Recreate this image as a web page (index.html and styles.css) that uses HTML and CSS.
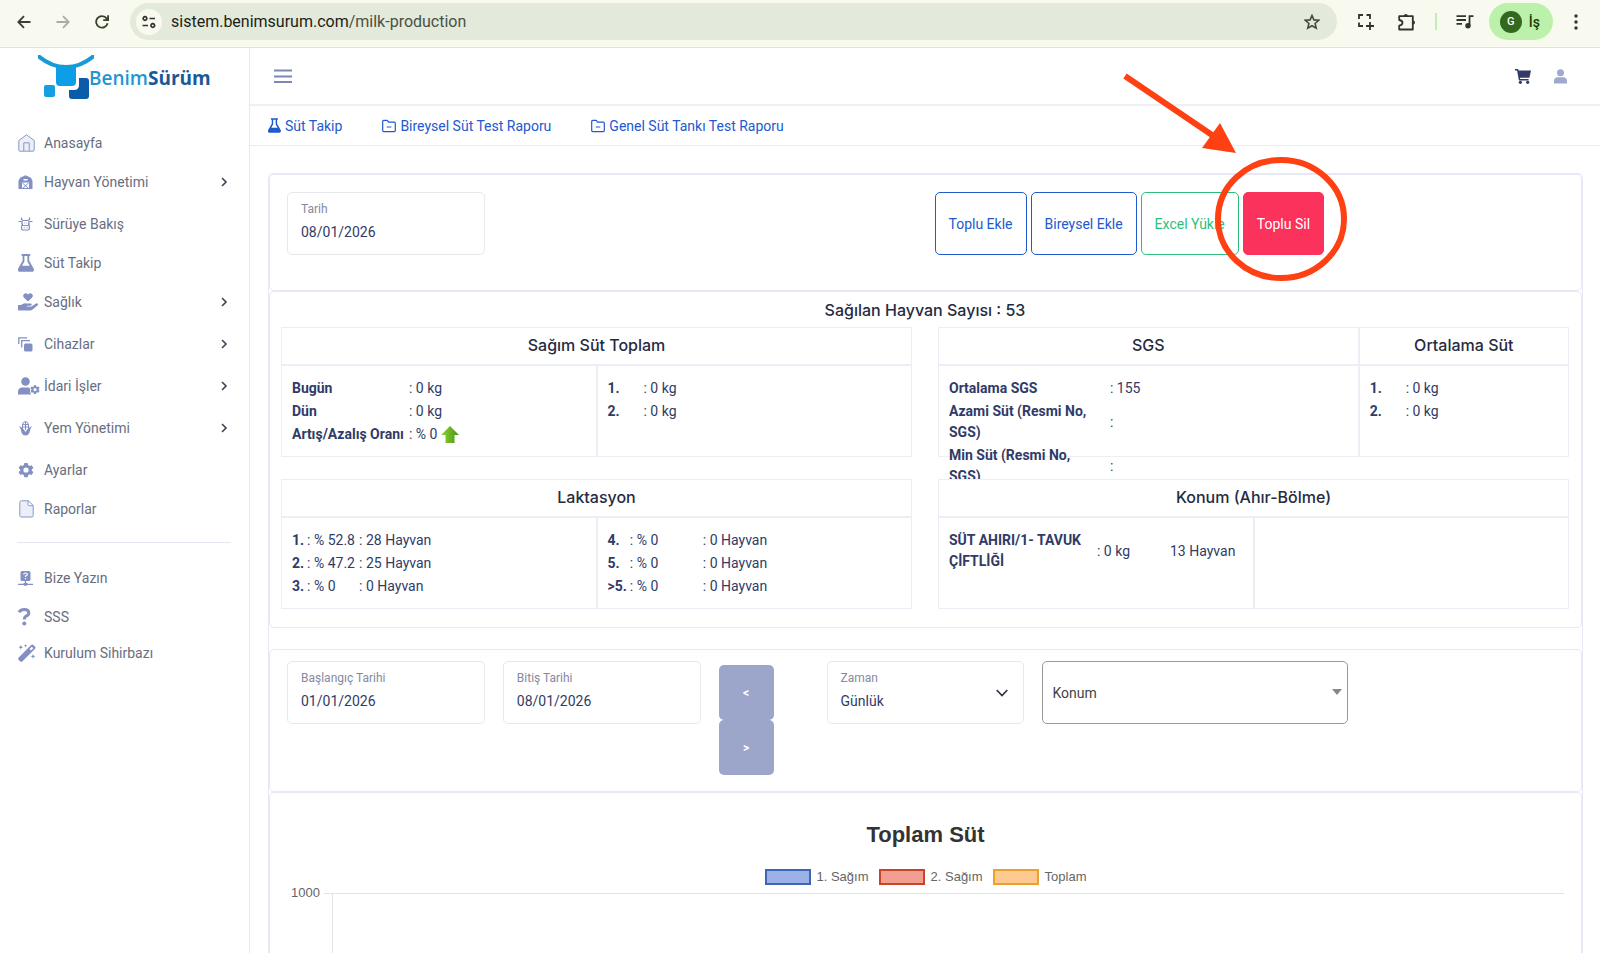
FILE: index.html
```html
<!DOCTYPE html>
<html lang="tr">

<head>
    <meta charset="UTF-8">
    <meta name="viewport" content="width=device-width, initial-scale=1.0">
    <title>BenimSürüm - Süt Takip</title>
    <link rel="stylesheet" href="styles.css">
</head>

<body>

    <!-- shared icons -->
    <svg class="sprite" aria-hidden="true">
        <symbol id="flask" viewBox="0 0 16 18">
            <path fill="currentColor" d="M3.6 0h8.6v2h-1v4.8l4.4 7.8c.9 1.700 0 3.200-1.600 3.200H1.800C.2 17.800-.7 16.300.2 14.600L4.600 6.800V2h-1zM6.400 2v5.400L4 11.800h7.800L9.400 7.400V2z" />
        </symbol>
        <symbol id="folder" viewBox="0 0 14 14">
            <path fill="none" stroke="currentColor" stroke-width="1.200" stroke-linejoin="round" d="M.7 3V11.600q0 1 1 1h10.600q1 0 1-1V4.200q0-1-1-1H6.600L5.200 1.400H1.700q-1 0-1 1zM4.700 8h4.600" />
        </symbol>
        <symbol id="chevron" viewBox="0 0 8 10">
            <path fill="none" stroke="#3f4254" stroke-width="1.600" d="M2 1l4 4-4 4" />
        </symbol>
        <symbol id="gear" viewBox="0 0 16 16">
            <path fill="currentColor" fill-rule="evenodd" d="M6.300 1h3.400l.4 2 1.600.9 2-.7 1.700 2.900-1.600 1.300v1.400l1.600 1.300-1.700 2.900-2-.7-1.600.9-.4 2H6.300l-.4-2-1.600-.9-2 .7L.6 10.100l1.600-1.300V7.400L.6 6.100l1.700-2.900 2 .7L5.900 3zM8 5.400a2.600 2.600 0 1 0 0 5.200 2.600 2.600 0 0 0 0-5.200z" />
        </symbol>
    </svg>

    <div class="browser">
        <button class="browser-btn" aria-label="Geri"><svg width="14" height="14" viewBox="0 0 14 14"><path fill="none" stroke="#3a4034" stroke-width="1.800" d="M13.500 7H1.500M7 1.200L1.300 7 7 12.800" /></svg></button>
        <button class="browser-btn" aria-label="İleri"><svg width="14" height="14" viewBox="0 0 14 14"><path fill="none" stroke="#a9aea3" stroke-width="1.800" d="M.5 7h12M7 1.200L12.700 7 7 12.800" /></svg></button>
        <button class="browser-btn" aria-label="Yenile"><svg width="14" height="14" viewBox="0 0 14 14"><path fill="none" stroke="#3a4034" stroke-width="1.800" d="M12.600 8.200A5.800 5.800 0 1 1 11.600 3.400L13 5M13.100 .3V5.200H8.200" /></svg></button>
        <div class="omnibox">
            <span class="site-info"><svg width="14" height="14" viewBox="0 0 14 14"><path fill="none" stroke="#30362b" stroke-width="1.700" d="M7.500 3.500H13M.5 10.500H6M3 1.700a1.800 1.800 0 1 0 .01 0zM10.800 8.700a1.800 1.800 0 1 0 .01 0z" /></svg></span>
            <span class="url">sistem.benimsurum.com<span class="path">/milk-production</span></span>
            <button class="browser-btn star" aria-label="Yer işareti"><svg width="16" height="16" viewBox="0 0 16 16"><path fill="none" stroke="#444a3e" stroke-width="1.600" d="M8 1.500l1.900 4.400 4.800.4-3.600 3.200 1.100 4.700L8 11.700l-4.200 2.500 1.100-4.700L1.300 6.300l4.800-.4z" /></svg></button>
        </div>
        <div class="browser-tools">
            <button class="browser-btn" aria-label="Ekran alıntısı"><svg width="16" height="16" viewBox="0 0 16 16"><path fill="none" stroke="#30362b" stroke-width="1.800" d="M1 5V1h4M8.500 1H12v4M1 8.500V12h4M12 8v8M8 12h8" /></svg></button>
            <button class="browser-btn" aria-label="Uzantılar"><svg width="18" height="18" viewBox="0 0 18 18"><path fill="none" stroke="#30362b" stroke-width="1.800" stroke-linejoin="round" d="M1.200 3.200H14.800V16.500H1.200V12.600Q4.500 12 4.500 9.800T1.200 7z" /><path fill="#30362b" d="M5.800 3a2 2 0 0 1 4 0zM15 7.500a2 2 0 0 1 0 4z" /></svg></button>
            <span class="tool-line"></span>
            <button class="browser-btn" aria-label="Medya"><svg width="18" height="16" viewBox="0 0 18 16"><path fill="none" stroke="#30362b" stroke-width="1.800" d="M.5 2.200H10M.5 6H10M.5 9.800H6M13.500 12V2.200H17.500" /><circle fill="#30362b" cx="12" cy="11.800" r="2.700" /></svg></button>
            <button class="profile"><span class="avatar">G</span>İş</button>
            <button class="browser-btn" aria-label="Menü"><svg width="4" height="16" viewBox="0 0 4 16"><g fill="#30362b"><circle cx="2" cy="2" r="1.700" /><circle cx="2" cy="8" r="1.700" /><circle cx="2" cy="14" r="1.700" /></g></svg></button>
        </div>
    </div>

    <div class="app">
        <aside class="sidebar">
            <a href="#" class="logo">
                <svg width="56" height="46" viewBox="0 0 56 46">
                    <path fill="none" stroke="#189bd3" stroke-width="4" d="M-2 -1Q12 12 28 12T58 -1" />
                    <path fill="#0c9fe8" d="M18 11q10 3 20 0v16q0 4-4 4H22q-4 0-4-4z" />
                    <rect fill="#12a0e2" x="6" y="30" width="11" height="12" rx="2" />
                    <path fill="#0a5ca8" d="M41 23h7q3 0 3 3v15q0 3-3 3H34q-3 0-3-3v-6h5q5 0 5-5z" />
                </svg>
                <span class="logo-text">Benim<b>Sürüm</b></span>
            </a>
            <nav class="menu">
                <a href="#" class="item"><span class="icon"><svg width="17" height="18" viewBox="0 0 17 18"><path fill="#eceffa" stroke="#8a97c4" d="M.8 6.500L8.500.8l7.700 5.700v9.700q0 1-1 1H1.800q-1 0-1-1zM5.800 17V8.800h5.400V17" /></svg></span>Anasayfa</a>
                <a href="#" class="item tall"><span class="icon"><svg width="15" height="14" viewBox="0 0 15 14"><path fill="currentColor" fill-rule="evenodd" d="M7.500.3L13 2.800 14.500 6v8H11V7.500H4V14H.5V6L2 2.800zM5.500 4h4v1.600h-4z" /><path fill="none" stroke="currentColor" d="M4.500 8l6 5.500M10.500 8l-6 5.500M4 13.500h7" /></svg></span>Hayvan Yönetimi<svg class="arrow" width="8" height="10"><use href="#chevron" /></svg></a>
                <a href="#" class="item tall"><span class="icon"><svg width="15" height="14" viewBox="0 0 15 14"><path fill="none" stroke="currentColor" stroke-width="1.200" d="M3.500.5v2l1.500 1h5l1.500-1v-2M.5 4.500h3.500l.5 4M14.500 4.500H11l-.5 4M4 4v5M11 4v5M5 8.500h5q1.500 0 1.500 2.200T10 13H5Q3.500 13 3.500 10.700T5 8.500zM5.800 10.700h.8M8.600 10.700h.8M6 6h.7M8.500 6h.7" /></svg></span>Sürüye Bakış</a>
                <a href="#" class="item"><span class="icon"><svg width="16" height="18"><use href="#flask" /></svg></span>Süt Takip</a>
                <a href="#" class="item tall"><span class="icon"><svg width="20" height="18" viewBox="0 0 20 18"><path fill="currentColor" d="M10 8.500L5.800 4.400Q4.500 2.800 5.800 1.200 8-.8 10 1.500 12-.8 14.200 1.200 15.500 2.800 14.200 4.400zM0 12h3q2.500-2 5-1.600h4.500q1.400.2 1.200 1.400-.2 1-1.400 1H9v.6h4.500l4.500-3q1.300-.6 1.900.5.4.900-.5 1.700l-4.700 4Q14 17.400 12.500 17.400H0z" /></svg></span>Sağlık<svg class="arrow" width="8" height="10"><use href="#chevron" /></svg></a>
                <a href="#" class="item tall"><span class="icon"><svg width="15" height="15" viewBox="0 0 15 15"><rect fill="currentColor" x="6" y="6.500" width="8.500" height="8" rx="1.500" /><path fill="none" stroke="currentColor" stroke-width="1.300" d="M.8 7V.8H9M3.700 10.500V3.700H12" /></svg></span>Cihazlar<svg class="arrow" width="8" height="10"><use href="#chevron" /></svg></a>
                <a href="#" class="item tall"><span class="icon"><svg width="22" height="18" viewBox="0 0 22 18"><circle fill="currentColor" cx="7.500" cy="4.500" r="4.300" /><path fill="currentColor" d="M0 17.500V15q0-4.500 4.500-4.500h6q1.500 0 1.500 1.500-.5 3 1 5.500z" /><use href="#gear" x="12" y="7.500" width="10" height="10" /></svg></span>İdari İşler<svg class="arrow" width="8" height="10"><use href="#chevron" /></svg></a>
                <a href="#" class="item tall"><span class="icon"><svg width="15" height="15" viewBox="0 0 15 15"><path fill="none" stroke="currentColor" d="M4.500 8V4q0-3 3-3.500 3 .5 3 3.500v4M7.500.5V9M4.500 3.500h6M4.500 6h6" /><path fill="currentColor" d="M1 5Q5 6.500 7.500 11 10 6.500 14 5q-1.500 2-2 4.500-.8 5-4.500 5t-4.500-5Q2.500 7 1 5z" /></svg></span>Yem Yönetimi<svg class="arrow" width="8" height="10"><use href="#chevron" /></svg></a>
                <a href="#" class="item tall"><span class="icon"><svg width="16" height="16"><use href="#gear" /></svg></span>Ayarlar</a>
                <a href="#" class="item"><span class="icon doc"><svg width="15" height="18" viewBox="0 0 15 18"><path fill="#eceffa" stroke="#8a97c4" d="M2.500.8h7l4.700 4.700v10q0 1.500-1.500 1.500H2.300Q.8 17 .8 15.500v-13Q.8.8 2.500.8zM9 .8v3.700q0 1.200 1.200 1.200h4" /></svg></span>Raporlar</a>
                <hr>
                <a href="#" class="item tall"><span class="icon"><svg width="15" height="15" viewBox="0 0 15 15"><path fill="currentColor" fill-rule="evenodd" d="M4 0h7q1.500 0 1.500 1.500v7Q12.500 10 11 10H8.200v2H9.500v.8H15V14H9v.8H6V14H0v-1.200h5.500V12h1.300v-2H4Q2.500 10 2.500 8.500v-7Q2.500 0 4 0z" /><path fill="none" stroke="#fff" stroke-width="1.200" d="M5.700 3.500q0-1.500 1.800-1.500t1.800 1.400Q9.300 4.400 7.500 5v1M7.500 7v1.200" /></svg></span>Bize Yazın</a>
                <a href="#" class="item"><span class="icon"><svg width="13" height="18" viewBox="0 0 13 18"><path fill="none" stroke="currentColor" stroke-width="3" d="M1 4.300Q2.500 1.500 6.200 1.500 10.800 1.500 10.800 5 10.800 7 8 8.200 6.300 9 6.300 11.500" /><circle fill="currentColor" cx="6.300" cy="15.500" r="2" /></svg></span>SSS</a>
                <a href="#" class="item"><span class="icon"><svg width="18" height="18" viewBox="0 0 18 18"><path fill="currentColor" fill-rule="evenodd" d="M.7 13.500L13.100 1.100q1.200-1.200 2.400 0l1.400 1.400q1.200 1.200 0 2.400L4.500 17.300q-1.200 1.200-2.400 0L.7 15.900q-1.200-1.200 0-2.400zM11.500 5l1.500 1.500 2.300-2.300-1.500-1.500z" /><path fill="currentColor" d="M2.800 1l.7 1.600 1.600.7-1.600.7-.7 1.600L2.100 4 .5 3.300l1.600-.7zM7.500 0l.5 1.200 1.200.5-1.200.5-.5 1.200L7 2.200l-1.200-.5L7 1.200zM15 10l.7 1.700 1.700.7-1.700.7L15 14.800l-.7-1.700-1.700-.7 1.700-.7z" /></svg></span>Kurulum Sihirbazı</a>
            </nav>
        </aside>

        <div class="content">
            <header class="topbar">
                <button class="plain" aria-label="Menüyü aç"><svg width="18" height="14" viewBox="0 0 18 14"><path fill="none" stroke="#7c88b3" stroke-width="1.800" d="M0 1.500h18M0 7.500h18M0 13h18" /></svg></button>
                <div class="topbar-right">
                    <button class="plain" aria-label="Sepet"><svg width="16" height="15" viewBox="0 0 16 15"><path fill="#303b67" d="M0 0h2.700q.6 0 .7.600L3.600 1.600H16L14.500 8.200q-.2.600-.8.600H5l.2 1.300h8.400v1.500H4.500q-.6 0-.7-.6L2.100 1.500H0z" /><circle fill="#303b67" cx="5.400" cy="13.300" r="1.600" /><circle fill="#303b67" cx="12.700" cy="13.300" r="1.600" /></svg></button>
                    <button class="plain" aria-label="Hesap"><svg width="13" height="15" viewBox="0 0 13 15"><g fill="#9fa9cf"><circle cx="6.500" cy="3.700" r="3.500" /><path d="M0 14.500v-2Q0 8.300 4 8.300h5q4 0 4 4.200v2z" /></g></svg></button>
                </div>
            </header>
            <nav class="tabs">
                <a href="#"><svg width="13" height="15"><use href="#flask" /></svg>Süt Takip</a>
                <a href="#"><svg width="14" height="14"><use href="#folder" /></svg>Bireysel Süt Test Raporu</a>
                <a href="#"><svg width="14" height="14"><use href="#folder" /></svg>Genel Süt Tankı Test Raporu</a>
            </nav>

            <main class="page">
                <section class="card filters top-filters">
                    <div class="field span2">
                        <label for="tarih">Tarih</label>
                        <input type="text" id="tarih" value="08/01/2026">
                    </div>
                    <div class="actions">
                        <button class="btn blue">Toplu Ekle</button>
                        <button class="btn blue">Bireysel Ekle</button>
                        <button class="btn green">Excel Yükle</button>
                        <div class="marked">
                            <button class="btn red">Toplu Sil</button>
                            <svg class="callout" width="240" height="222" viewBox="0 0 240 222">
                                <ellipse cx="166" cy="153" rx="63" ry="59" fill="none" stroke="#ff4013" stroke-width="6" />
                                <path d="M10 10L100 71" stroke="#ff4013" stroke-width="6" />
                                <path d="M121 87L87 82 105 57z" fill="#ff4013" />
                            </svg>
                        </div>
                    </div>
                </section>

                <section class="card stats">
                    <h2>Sağılan Hayvan Sayısı : 53</h2>
                    <div class="panels">
                        <div class="panel">
                            <h3 class="wide">Sağım Süt Toplam</h3>
                            <div class="box">
                                <table>
                                    <tr><th class="c117">Bugün</th><td>: 0 kg</td></tr>
                                    <tr><th>Dün</th><td>: 0 kg</td></tr>
                                    <tr><th>Artış/Azalış Oranı</th><td>: % 0 <svg class="up" width="18" height="17" viewBox="0 0 18 17"><defs><linearGradient id="green"><stop offset="0" stop-color="#8fd53a" /><stop offset="1" stop-color="#46930f" /></linearGradient></defs><path fill="url(#green)" d="M9 0l9 9h-4.500v8h-9V9H0z" /></svg></td></tr>
                                </table>
                            </div>
                            <div class="box">
                                <table>
                                    <tr><th class="c36">1.</th><td>: 0 kg</td></tr>
                                    <tr><th>2.</th><td>: 0 kg</td></tr>
                                </table>
                            </div>
                        </div>
                        <div class="panel sgs">
                            <h3>SGS</h3>
                            <h3>Ortalama Süt</h3>
                            <div class="box">
                                <table>
                                    <tr><th class="c161">Ortalama SGS</th><td>: 155</td></tr>
                                    <tr><th class="c161">Azami Süt (Resmi No, SGS)</th><td>:</td></tr>
                                    <tr><th class="c161">Min Süt (Resmi No, SGS)</th><td>:</td></tr>
                                </table>
                            </div>
                            <div class="box">
                                <table>
                                    <tr><th class="c36">1.</th><td>: 0 kg</td></tr>
                                    <tr><th>2.</th><td>: 0 kg</td></tr>
                                </table>
                            </div>
                        </div>
                        <div class="panel">
                            <h3 class="wide">Laktasyon</h3>
                            <div class="box">
                                <table>
                                    <tr><th>1.</th><td class="c52">: % 52.8</td><td>: 28 Hayvan</td></tr>
                                    <tr><th>2.</th><td>: % 47.2</td><td>: 25 Hayvan</td></tr>
                                    <tr><th>3.</th><td>: % 0</td><td>: 0 Hayvan</td></tr>
                                </table>
                            </div>
                            <div class="box">
                                <table>
                                    <tr><th>4.</th><td class="c73">: % 0</td><td>: 0 Hayvan</td></tr>
                                    <tr><th>5.</th><td>: % 0</td><td>: 0 Hayvan</td></tr>
                                    <tr><th>&gt;5.</th><td>: % 0</td><td>: 0 Hayvan</td></tr>
                                </table>
                            </div>
                        </div>
                        <div class="panel">
                            <h3 class="wide">Konum (Ahır-Bölme)</h3>
                            <div class="box">
                                <table>
                                    <tr><th class="c148">SÜT AHIRI/1- TAVUK ÇİFTLİĞİ</th><td class="c73">: 0 kg</td><td>13 Hayvan</td></tr>
                                </table>
                            </div>
                            <div class="box"></div>
                        </div>
                    </div>
                </section>

                <section class="card filters range">
                    <div class="field span2">
                        <label for="baslangic">Başlangıç Tarihi</label>
                        <input type="text" id="baslangic" value="01/01/2026">
                    </div>
                    <div class="field span2">
                        <label for="bitis">Bitiş Tarihi</label>
                        <input type="text" id="bitis" value="08/01/2026">
                    </div>
                    <div class="steps">
                        <button class="step">&lt;</button>
                        <button class="step">&gt;</button>
                    </div>
                    <div class="field span2 with-arrow">
                        <label for="zaman">Zaman</label>
                        <select id="zaman"><option>Günlük</option></select>
                        <svg class="down" width="12" height="8" viewBox="0 0 12 8"><path fill="none" stroke="#2b3040" stroke-width="1.600" d="M.7 1L6 6.500 11.300 1" /></svg>
                    </div>
                    <div class="konum">
                        <select id="konum" aria-label="Konum"><option>Konum</option></select>
                        <span class="caret"></span>
                    </div>
                </section>

                <section class="card chart">
                    <h4>Toplam Süt</h4>
                    <div class="legend">
                        <span class="key"><i class="swatch s1"></i>1. Sağım</span>
                        <span class="key"><i class="swatch s2"></i>2. Sağım</span>
                        <span class="key"><i class="swatch s3"></i>Toplam</span>
                    </div>
                    <div class="plot">
                        <span class="tick">1000</span>
                        <span class="tick-line"></span>
                        <div class="area"></div>
                    </div>
                </section>
            </main>
        </div>
    </div>

</body>

</html>
```

FILE: styles.css
```css
* {
    box-sizing: border-box;
}

body {
    margin: 0;
    min-height: 100vh;
    display: flex;
    flex-direction: column;
    background-color: #fff;
    font-family: Roboto, sans-serif;
    font-size: 14px;
    color: #303b67;
}

a {
    text-decoration: none;
}

button,
input,
select {
    font-family: inherit;
    cursor: pointer;
}

.sprite {
    display: none;
}

/* browser bar */
.browser {
    display: flex;
    align-items: center;
    height: 48px;
    padding: 0 22px 4px 17px;
    gap: 25px;
    background-color: #f9faef;
    border-bottom: 1px solid #dfe4d6;
}

.browser-btn,
.plain {
    display: flex;
    padding: 0;
    border: none;
    background: none;
}

.omnibox {
    flex: 1;
    display: flex;
    align-items: center;
    height: 37px;
    margin-left: -4px;
    padding: 0 17px 0 6px;
    border-radius: 19px;
    background-color: #e3eadb;
}

.site-info {
    display: flex;
    align-items: center;
    justify-content: center;
    width: 26px;
    height: 26px;
    border-radius: 50%;
    background-color: #f9faef;
}

.url {
    flex: 1;
    margin-left: 9px;
    font-size: 16px;
    color: #1b1f17;
}

.path {
    color: #4a5044;
}

.browser-tools {
    display: flex;
    align-items: center;
    gap: 24px;
    margin-left: -4px;
}

.tool-line {
    width: 2px;
    height: 17px;
    margin: 0 -5px;
    background-color: #bdf0ae;
}

.profile {
    display: flex;
    align-items: center;
    gap: 7px;
    height: 37px;
    margin: 0 -3px 0 -9px;
    padding: 0 13px 0 11px;
    border: none;
    border-radius: 19px;
    background-color: #bcf1ac;
    font-size: 14px;
    font-weight: 500;
    color: #143a08;
}

.avatar {
    width: 22px;
    line-height: 22px;
    border-radius: 50%;
    background-color: #33691e;
    color: #fff;
    font-size: 11px;
    text-align: center;
}

.app {
    flex: 1;
    display: flex;
}

/* sidebar */
.sidebar {
    width: 250px;
    flex-shrink: 0;
    border-right: 1px solid #e6e9f0;
}

.logo {
    display: flex;
    align-items: center;
    height: 77px;
    padding: 0 0 17px 38px;
}

.logo svg {
    flex-shrink: 0;
    margin-right: -5px;
}

.logo-text {
    font-size: 19px;
    line-height: 20px;
    font-family: "Open Sans", sans-serif;
    font-weight: 600;
    color: #1e96cf;
}

.logo-text b {
    font-weight: 700;
    color: #17599a;
}

.menu {
    padding: 0 18px 0 17px;
}

.item {
    display: flex;
    align-items: center;
    height: 36px;
    padding-right: 3px;
    color: #686e80;
}

.item.tall {
    height: 42px;
}

.icon {
    display: flex;
    width: 27px;
    padding-left: 1px;
    color: #8490c2;
}

.icon svg {
    flex-shrink: 0;
}

.icon.doc {
    padding-left: 2px;
}

.arrow {
    margin-left: auto;
}

.menu hr {
    margin: 15px 0 14px;
    border: none;
    border-top: 1px solid #e3e7f0;
}

/* header */
.content {
    flex: 1;
    min-width: 0;
    display: flex;
    flex-direction: column;
}

.topbar {
    display: flex;
    justify-content: space-between;
    align-items: center;
    height: 58px;
    padding: 0 33px 0 24px;
    border-bottom: 2px solid #eff0f4;
}

.topbar-right {
    display: flex;
    gap: 23px;
}

.tabs {
    display: flex;
    align-items: center;
    gap: 40px;
    height: 40px;
    padding: 0 18px;
    border-bottom: 1px solid #e9ecf5;
}

.tabs a {
    display: flex;
    align-items: center;
    gap: 4px;
    color: #2159cf;
}

/* cards */
.page {
    flex: 1;
    display: flex;
    flex-direction: column;
    margin: 27px 17px 0 18px;
    border: 1px solid #e6e9f3;
    border-bottom: none;
    border-radius: 5px 5px 0 0;
}

.card {
    border: 1px solid #e6e9f3;
    border-radius: 5px;
}

.filters {
    display: grid;
    grid-template-columns: repeat(12, 1fr);
    gap: 18px;
    align-items: start;
}

.top-filters {
    padding: 17px 17px 35px;
}

.span2 {
    grid-column: span 2;
}

.field {
    height: 63px;
    padding: 7px 13px 8px;
    border: 1px solid #e6e8ee;
    border-radius: 5px;
}

.field label {
    display: block;
    font-size: 12px;
    line-height: 18px;
    color: #858a9f;
}

.field input,
.field select {
    display: block;
    width: 100%;
    height: 24px;
    margin-top: 2px;
    padding: 0;
    border: none;
    outline: none;
    appearance: none;
    background: none;
    font-size: 14px;
    color: #303b67;
}

.actions {
    grid-column: 7 / -1;
    display: flex;
    gap: 4px;
}

.btn {
    height: 63px;
    padding: 0 13px;
    border: 1px solid;
    border-radius: 5px;
    background-color: #fff;
    font-size: 14px;
    white-space: nowrap;
}

.blue {
    color: #2159cf;
}

.green {
    color: #2cbf7c;
}

.red {
    border-color: #fa325c;
    background-color: #fa325c;
    color: #fff;
}

.marked {
    position: relative;
}

/* hand drawn arrow and ring over the delete button */
.callout {
    position: absolute;
    left: -128px;
    top: -126px;
    pointer-events: none;
}

/* statistics */
.stats {
    padding: 6px 12px 18px 11px;
}

h2,
h3 {
    margin: 0;
    font-family: Inter, sans-serif;
    font-size: 16px;
    font-weight: 500;
    text-align: center;
    color: #252b42;
}

h2 {
    line-height: 24px;
    margin-bottom: 5px;
}

h3 {
    line-height: 34px;
    padding-bottom: 2px;
    border: 1px solid #eceef5;
}

.panels {
    display: grid;
    grid-template-columns: 1fr 1fr;
    gap: 22px 26px;
}

.panel {
    display: grid;
    grid-template-columns: 1fr 1fr;
    position: relative;
    background-color: #fff;
}

.panel.sgs {
    grid-template-columns: 2fr 1fr;
}

.wide {
    grid-column: span 2;
}

.box {
    height: 92px;
    padding: 11px 10px 0;
    border: 1px solid #eceef5;
}

.box table {
    border-spacing: 0;
    line-height: 21px;
}

.box th,
.box td {
    padding: 1px 0;
    text-align: left;
    white-space: nowrap;
}

.box th {
    padding-right: 3px;
    font-weight: 700;
    white-space: normal;
}

.c117 {
    width: 117px;
}

.c36 {
    width: 36px;
}

.box .c161 {
    width: 161px;
    padding-right: 18px;
}

.c148 {
    width: 148px;
}

.c52 {
    width: 52px;
}

.c73 {
    width: 73px;
}

.up {
    vertical-align: -4px;
}

/* date range */
.range {
    margin-top: 21px;
    padding: 11px 17px 16px;
}

.steps {
    grid-column: span 1;
    padding-top: 4px;
    display: flex;
    flex-direction: column;
    align-items: flex-start;
}

.step {
    width: 55px;
    height: 55px;
    border: none;
    border-radius: 5px;
    background-color: #9ca6ca;
    color: #fff;
    font-size: 12px;
    font-weight: 700;
}

.with-arrow,
.konum {
    position: relative;
}

.down {
    position: absolute;
    right: 15px;
    top: 27px;
}

.konum {
    grid-column: span 3;
}

.konum select {
    display: block;
    width: 100%;
    height: 63px;
    padding: 0 9px;
    border: 1px solid #999;
    border-radius: 5px;
    appearance: none;
    background-color: #fff;
    font-size: 14px;
    color: #444;
}

.caret {
    position: absolute;
    right: 6px;
    top: 28px;
    border: 5px solid transparent;
    border-top: 6px solid #888;
    border-bottom: none;
}

/* chart */
.chart {
    flex: 1;
    display: flex;
    flex-direction: column;
    padding: 28px 17px 0;
    border-bottom: none;
    border-radius: 5px 5px 0 0;
    font-family: "Liberation Sans", sans-serif;
    font-size: 13px;
    color: #666;
}

h4 {
    margin: 0;
    font-size: 22px;
    line-height: 28px;
    text-align: center;
    color: #333;
}

.legend {
    display: flex;
    justify-content: center;
    gap: 10px;
    margin-top: 20px;
    line-height: 16px;
}

.key {
    display: flex;
    align-items: center;
    gap: 6px;
}

.swatch {
    width: 46px;
    height: 16px;
    border: 2px solid;
}

.s1 {
    background-color: #9bb1e8;
    border-color: #3d66b3;
}

.s2 {
    background-color: #f19f90;
    border-color: #c8452b;
}

.s3 {
    background-color: #ffca92;
    border-color: #e9a32c;
}

.plot {
    flex: 1;
    display: flex;
    padding-left: 4px;
}

.tick {
    line-height: 16px;
}

.tick-line {
    width: 8px;
    height: 1px;
    margin: 8px 0 0 4px;
    background-color: #e3e3e3;
}

.area {
    flex: 1;
    min-height: 40px;
    margin-top: 8px;
    border-top: 1px solid #e3e3e3;
    border-left: 1px solid #e3e3e3;
}
```
